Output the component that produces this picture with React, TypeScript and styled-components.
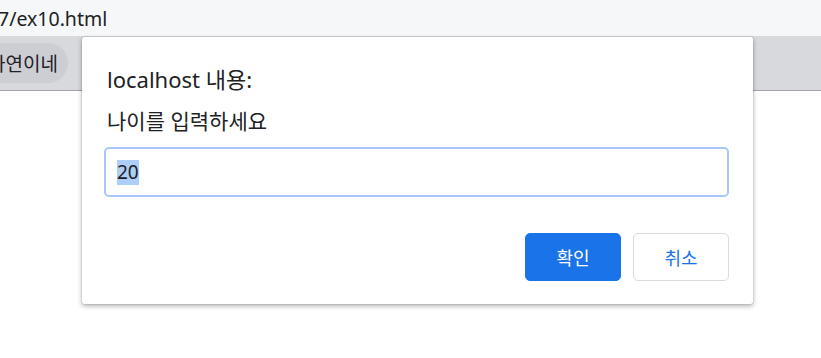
import styled, { createGlobalStyle } from 'styled-components';

const GlobalStyle = createGlobalStyle`
  html, body {
    margin: 0;
    padding: 0;
    background: #ffffff;
  }
  body {
    font-family: "Noto Sans", "Noto Sans CJK KR", sans-serif;
    color: #202124;
    overflow: hidden;
  }
`;

const Page = styled.div`
  position: relative;
  width: 821px;
  height: 358px;
  background: #ffffff;
`;

const AddressBar = styled.div`
  height: 36px;
  background: #f6f7f9;
  display: flex;
  align-items: center;
  font-size: 19.5px;
  color: #202124;
  white-space: nowrap;
  margin-left: -2px;
`;

const BookmarkBar = styled.div`
  height: 54px;
  background: #d8d9dd;
  border-bottom: 1px solid #a3a4a8;
  display: flex;
  align-items: center;
  overflow: hidden;
`;

const Chip = styled.div`
  height: 40px;
  margin-left: -24px;
  padding: 0 10px 0 12px;
  border-radius: 20px;
  background: #cdced3;
  display: flex;
  align-items: center;
  font-size: 19px;
  color: #202124;
  white-space: nowrap;
`;

const Dialog = styled.div`
  position: absolute;
  left: 82px;
  top: 37px;
  width: 671px;
  height: 267px;
  box-sizing: border-box;
  padding: 28px 24px 23px 22px;
  background: #ffffff;
  border-radius: 2px;
  box-shadow: 0 0 1px rgba(0, 0, 0, 0.45), 0 2px 5px rgba(0, 0, 0, 0.32);
  display: flex;
  flex-direction: column;
`;

const Title = styled.div`
  padding-left: 3px;
  font-size: 22px;
  line-height: 28px;
  color: #202124;
`;

const Message = styled.div`
  padding-left: 3px;
  margin-top: 16px;
  font-size: 21px;
  line-height: 24px;
  color: #202124;
`;

const Field = styled.div`
  margin-top: 14px;
  height: 50px;
  box-sizing: border-box;
  border: 2px solid #a8c7fa;
  border-radius: 5px;
  display: flex;
  align-items: center;
  padding-left: 11px;
`;

const Selected = styled.span`
  background: #accef7;
  font-size: 19px;
  line-height: 25px;
  color: #202124;
`;

const Actions = styled.div`
  margin-top: auto;
  display: flex;
  justify-content: flex-end;
  gap: 12px;
`;

const Button = styled.div<{ $primary?: boolean }>`
  width: 96px;
  height: 48px;
  box-sizing: border-box;
  border-radius: 5px;
  display: flex;
  align-items: center;
  justify-content: center;
  font-size: 18px;
  background: ${(p) => (p.$primary ? '#1a73e8' : '#ffffff')};
  color: ${(p) => (p.$primary ? '#ffffff' : '#1a73e8')};
  border: 1px solid ${(p) => (p.$primary ? '#1a73e8' : '#dadce0')};
`;

export default function App() {
  return (
    <Page>
      <GlobalStyle />
      <AddressBar>7/ex10.html</AddressBar>
      <BookmarkBar>
        <Chip>가연이네</Chip>
      </BookmarkBar>
      <Dialog>
        <Title>localhost 내용:</Title>
        <Message>나이를 입력하세요</Message>
        <Field>
          <Selected>20</Selected>
        </Field>
        <Actions>
          <Button $primary>확인</Button>
          <Button>취소</Button>
        </Actions>
      </Dialog>
    </Page>
  );
}
